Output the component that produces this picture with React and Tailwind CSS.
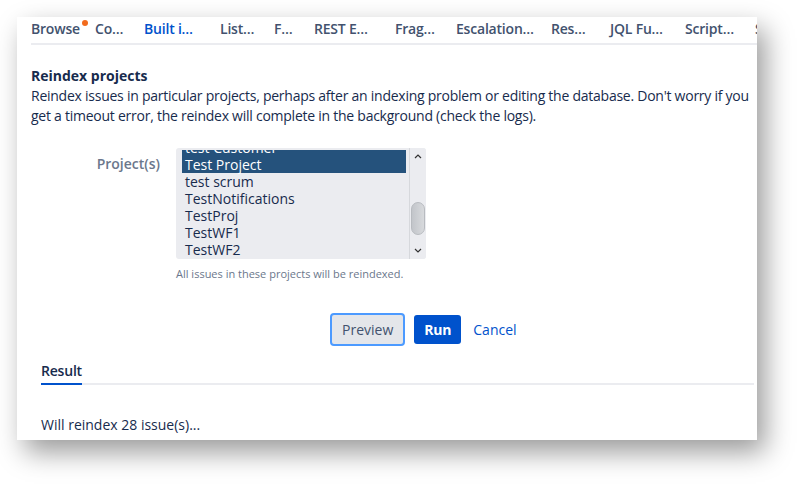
import { useState } from 'react';

const tabs = [
  { label: 'Browse', w: 'w-[64px]', dot: true },
  { label: 'Co…', w: 'w-[49px]' },
  { label: 'Built i…', w: 'w-[76px]', active: true },
  { label: 'List…', w: 'w-[54px]' },
  { label: 'F…', w: 'w-[40px]' },
  { label: 'REST E…', w: 'w-[81px]' },
  { label: 'Frag…', w: 'w-[61px]' },
  { label: 'Escalation…', w: 'w-[95px]' },
  { label: 'Res…', w: 'w-[59px]' },
  { label: 'JQL Fu…', w: 'w-[75px]' },
  { label: 'Script…', w: 'w-[70px]' },
  { label: 'Sc…', w: 'w-[40px]' },
];

const projects = [
  { name: 'test Customer', selected: true },
  { name: 'Test Project', selected: true },
  { name: 'test scrum' },
  { name: 'TestNotifications' },
  { name: 'TestProj' },
  { name: 'TestWF1' },
  { name: 'TestWF2' },
];

function Tab({ tab }) {
  return (
    <div className={`${tab.w} shrink-0 flex`}>
      <div
        className={`relative pb-[4px] whitespace-nowrap tracking-[-0.2px] ${
          tab.active ? 'w-[60px] text-[#0052cc] border-b-2 border-[#0052cc] -mb-[2px]' : 'text-[#42526e]'
        }`}
      >
        {tab.label}
        {tab.dot && <span className="absolute -right-[8px] top-[1px] w-[6px] h-[6px] rounded-full bg-[#f26b1d]" />}
      </div>
    </div>
  );
}

function ProjectSelect() {
  const [items] = useState(projects);
  return (
    <div className="w-[250px] h-[111px] bg-[#ebecf0] rounded-[3px] flex overflow-hidden">
      <div className="flex-1 ml-[6px] mr-[3px] mt-[2px] overflow-hidden">
        <div className="-mt-[11px]">
          {items.map((p) => (
            <div
              key={p.name}
              className={`h-[17px] leading-[17px] pl-[3px] text-[14px] ${
                p.selected ? 'bg-[#25527c] text-white' : 'text-[#172b4d]'
              }`}
            >
              {p.name}
            </div>
          ))}
        </div>
      </div>
      <div className="w-[17px] flex flex-col items-center bg-[#ebecf0] border-l border-[#d6d8dc] text-[#42526e]">
        <svg width="8" height="6" viewBox="0 0 8 6" className="mt-[5px]">
          <path d="M1 5 L4 2 L7 5" fill="none" stroke="#333" strokeWidth="1.2" />
        </svg>
        <div className="flex-1 w-full flex flex-col justify-start pt-[43px] px-[1px]">
          <div className="h-[33px] w-full rounded-[7px] bg-gradient-to-r from-[#c2c5ca] to-[#d8dadd] border border-[#b8bbc0]" />
        </div>
        <svg width="8" height="6" viewBox="0 0 8 6" className="mb-[5px]">
          <path d="M1 1 L4 4 L7 1" fill="none" stroke="#333" strokeWidth="1.2" />
        </svg>
      </div>
    </div>
  );
}

export default function App() {
  return (
    <div
      className="w-[805px] h-[489px] bg-white pt-[17px] pl-[17px] overflow-hidden"
      style={{ fontFamily: '"Open Sans", "Noto Sans", sans-serif' }}
    >
      <div className="w-[740px] h-[423px] bg-white shadow-[8px_12px_26px_rgba(0,0,0,0.4)] overflow-hidden text-[14px] text-[#172b4d]">
        <div className="pl-[14px]">
          <div className="flex pt-[2px] border-b-2 border-[#ebecf0] text-[14px] font-semibold leading-[20px] overflow-hidden">
            {tabs.map((t) => (
              <Tab key={t.label} tab={t} />
            ))}
          </div>

          <div className="mt-[21px] leading-[20px]">
            <h2 className="font-bold text-[14px]">Reindex projects</h2>
            <p className="w-[725px] tracking-[-0.25px]">
              Reindex issues in particular projects, perhaps after an indexing problem or editing the database. Don't worry if you
              get a timeout error, the reindex will complete in the background (check the logs).
            </p>
          </div>

          <div className="mt-[22px] flex gap-[16px]">
            <label className="w-[129px] text-right font-semibold text-[#6b778c] pt-[6px] leading-[20px]">Project(s)</label>
            <div>
              <ProjectSelect />
              <p className="mt-[8px] text-[11px] text-[#6b778c] leading-[14px]">All issues in these projects will be reindexed.</p>
            </div>
          </div>

          <div className="mt-[32px] flex items-center pl-[299px]">
            <button className="h-[33px] px-[10px] rounded-[4px] border-2 border-[#4c9aff] bg-[#e4e6ea] text-[#42526e]">
              Preview
            </button>
            <button className="ml-[9px] h-[29px] px-[10px] rounded-[3px] bg-[#0052cc] text-white font-bold tracking-[-0.2px]">
              Run
            </button>
            <a className="ml-[12px] text-[#0052cc]">Cancel</a>
          </div>
        </div>

        <div className="pl-[24px] pr-[3px] mt-[15px]">
          <div className="border-b-2 border-[#ebecf0] flex">
            <div className="w-[41px] font-semibold pb-[2px] leading-[20px] tracking-[-0.2px] border-b-2 border-[#0052cc] -mb-[2px]">
              Result
            </div>
          </div>
          <p className="mt-[30px] leading-[20px]">Will reindex 28 issue(s)...</p>
        </div>
      </div>
    </div>
  );
}
